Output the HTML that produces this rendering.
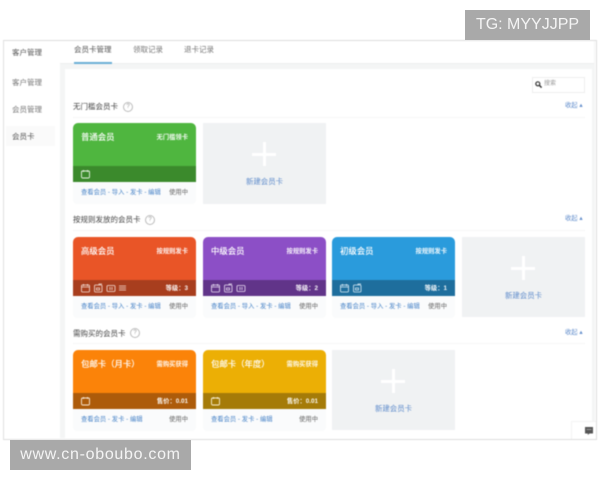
<!DOCTYPE html>
<html lang="zh">
<head>
<meta charset="utf-8">
<style>
html,body{margin:0;padding:0;width:600px;height:480px;overflow:hidden;background:#fff}
body{position:relative;font-family:"Liberation Sans","Noto Sans CJK SC",sans-serif;color:#555}
.a{position:absolute;white-space:nowrap}
#wrap{position:absolute;left:0;top:0;width:600px;height:480px;filter:blur(.4px)}
.card{position:absolute;width:123px;height:81px}
.top{position:absolute;left:0;top:0;width:123px;height:59px;border-radius:5px 5px 0 0;overflow:hidden}
.bar{position:absolute;left:0;right:0;bottom:0;height:16px}
.nm{position:absolute;left:8px;top:8px;font-size:8.4px;line-height:12px;color:#fff;white-space:nowrap;text-shadow:0 0 .4px #fff}
.ty{position:absolute;right:8px;top:9.5px;font-size:6.3px;line-height:10px;color:#fff;font-weight:bold;white-space:nowrap;opacity:.92}
.pr{position:absolute;right:8px;top:3.5px;font-size:6.3px;line-height:10px;color:#fff;font-weight:bold;white-space:nowrap;opacity:.95}
.ic{position:absolute;left:8px;top:3px;height:10px}
.ft{position:absolute;left:0;top:59px;width:123px;height:22px;background:#fafbfc;border-radius:0 0 4px 4px}
.ln{position:absolute;left:8px;top:6px;font-size:6.3px;line-height:10px;color:#4a85c8;white-space:nowrap}
.st{position:absolute;right:8px;top:6px;font-size:6.3px;line-height:10px;color:#666;white-space:nowrap}
.new{position:absolute;width:123px;background:#f0f2f3}
.new i{position:absolute;left:49px;width:24px;height:2.5px;background:#fff}
.new b{position:absolute;left:60px;width:2.5px;height:24px;background:#fff}
.new span{position:absolute;left:0;width:123px;text-align:center;font-size:7.4px;line-height:10px;color:#5f8ccb;font-weight:normal}
.h{position:absolute;left:73px;font-size:7.5px;line-height:12px;color:#444;white-space:nowrap}
.q{position:absolute;width:8px;height:8px;border:1px solid #bbb;border-radius:50%;font-size:6px;line-height:8px;text-align:center;color:#999}
.m{position:absolute;left:565px;font-size:6.3px;line-height:10px;color:#5f8ccb;white-space:nowrap}
.hr{position:absolute;left:73px;width:512px;height:1px;background:#f6f6f6}
.s{position:absolute;left:12px;font-size:7.5px;line-height:10px;color:#777;white-space:nowrap}
.t{position:absolute;top:44.5px;font-size:7.5px;line-height:10px;color:#777;white-space:nowrap}
</style>
</head>
<body>
<div id="wrap">
<div class="a" style="left:3px;top:40px;width:592px;height:398px;border:1px solid #ddd;border-left-color:#e0e0e0;background:#fff;box-sizing:content-box"></div>
<div class="a" style="left:60px;top:41px;width:535px;height:397px;background:#f4f5f5"></div>
<div class="a" style="left:60px;top:41px;width:534px;height:22px;background:#fff;border-bottom:1px solid #eee"></div>
<div class="a" style="left:65px;top:69px;width:527px;height:369px;background:#fff"></div>

<div class="s" style="top:48px;color:#555">客户管理</div>
<div class="s" style="top:78px">客户管理</div>
<div class="s" style="top:105px">会员管理</div>
<div class="a" style="left:6px;top:126px;width:49px;height:20px;background:#fafafa"></div>
<div class="s" style="top:132px;color:#555">会员卡</div>

<div class="t" style="left:74px;color:#555">会员卡管理</div>
<div class="t" style="left:133px">领取记录</div>
<div class="t" style="left:184px">退卡记录</div>
<div class="a" style="left:74px;top:62px;width:38px;height:2px;background:#6aaed6"></div>

<div class="a" style="left:532px;top:77px;width:51px;height:14px;border:1px solid #eee;background:#fff"></div>
<svg class="a" style="left:535px;top:81px" width="7" height="7" viewBox="0 0 7 7"><circle cx="2.8" cy="2.8" r="2" fill="none" stroke="#333" stroke-width="1.2"/><path d="M4.4 4.4L6.6 6.6" stroke="#333" stroke-width="1.5"/></svg>
<div class="a" style="left:544px;top:80px;font-size:6px;line-height:9px;color:#999">搜索</div>

<!-- Section 1 -->
<div class="h" style="top:100.5px">无门槛会员卡</div><div class="q" style="left:123px;top:102px">?</div>
<div class="m" style="top:101px">收起 ▴</div>
<div class="hr" style="top:117px"></div>

<div class="card" style="left:73px;top:123px">
 <div class="top" style="background:#4fb63f"><div class="nm">普通会员</div><div class="ty">无门槛领卡</div>
 <div class="bar" style="background:#3b8a2c"><svg class="ic" width="10" height="10" viewBox="0 0 10 10"><rect x="0.5" y="2" width="8" height="7" rx="1.2" fill="none" stroke="#e8f3e4" stroke-width=".9"/><path d="M2.5 1v2M6.5 1v2" stroke="#e8f3e4" stroke-width=".8"/></svg></div></div>
 <div class="ft"><div class="ln">查看会员 - 导入 - 发卡 - 编辑</div><div class="st">使用中</div></div>
</div>
<div class="new" style="left:203px;top:123px;height:81px"><i style="top:30px"></i><b style="top:19px"></b><span style="top:54px">新建会员卡</span></div>

<!-- Section 2 -->
<div class="h" style="top:214px">按规则发放的会员卡</div><div class="q" style="left:145px;top:215px">?</div>
<div class="m" style="top:214px">收起 ▴</div>
<div class="hr" style="top:230px"></div>

<div class="card" style="left:73px;top:237px">
 <div class="top" style="background:#e95527"><div class="nm">高级会员</div><div class="ty">按规则发卡</div>
 <div class="bar" style="background:#a83e1e"><svg class="ic" width="48" height="10" viewBox="0 0 48 10" fill="none" stroke="#f6e2da" stroke-width=".8"><rect x="0.5" y="2" width="8" height="7" rx="1"/><path d="M.5 4h8M2.5 1v2M6.5 1v2"/><rect x="13.5" y="2" width="7.5" height="7" rx="1"/><path d="M15.5 5h3v2h-3zM18 2V1h3"/><rect x="26" y="2.5" width="8" height="6" rx="1"/><path d="M29 4v3M31 4v3"/><path d="M38 3h7M38 5h7M38 7h7"/></svg><div class="pr">等级：3</div></div></div>
 <div class="ft"><div class="ln">查看会员 - 导入 - 发卡 - 编辑</div><div class="st">使用中</div></div>
</div>
<div class="card" style="left:203px;top:237px">
 <div class="top" style="background:#8c4fc6"><div class="nm">中级会员</div><div class="ty">按规则发卡</div>
 <div class="bar" style="background:#613489"><svg class="ic" width="48" height="10" viewBox="0 0 48 10" fill="none" stroke="#ebe0f4" stroke-width=".8"><rect x="0.5" y="2" width="8" height="7" rx="1"/><path d="M.5 4h8M2.5 1v2M6.5 1v2"/><rect x="13.5" y="2" width="7.5" height="7" rx="1"/><path d="M15.5 5h3v2h-3zM18 2V1h3"/><rect x="26" y="2.5" width="8" height="6" rx="1"/><path d="M29 4v3M31 4v3"/></svg><div class="pr">等级：2</div></div></div>
 <div class="ft"><div class="ln">查看会员 - 导入 - 发卡 - 编辑</div><div class="st">使用中</div></div>
</div>
<div class="card" style="left:332px;top:237px">
 <div class="top" style="background:#2a9bdc"><div class="nm">初级会员</div><div class="ty">按规则发卡</div>
 <div class="bar" style="background:#1e6e9d"><svg class="ic" width="48" height="10" viewBox="0 0 48 10" fill="none" stroke="#dcedf7" stroke-width=".8"><rect x="0.5" y="2" width="8" height="7" rx="1"/><path d="M.5 4h8M2.5 1v2M6.5 1v2"/><rect x="13.5" y="2" width="7.5" height="7" rx="1"/><path d="M15.5 5h3v2h-3zM18 2V1h3"/></svg><div class="pr">等级：1</div></div></div>
 <div class="ft"><div class="ln">查看会员 - 导入 - 发卡 - 编辑</div><div class="st">使用中</div></div>
</div>
<div class="new" style="left:462px;top:237px;height:80px"><i style="top:30px"></i><b style="top:19px"></b><span style="top:54px">新建会员卡</span></div>

<!-- Section 3 -->
<div class="h" style="top:327.5px">需购买的会员卡</div><div class="q" style="left:130px;top:328px">?</div>
<div class="m" style="top:328px">收起 ▴</div>
<div class="hr" style="top:343px"></div>

<div class="card" style="left:73px;top:350px">
 <div class="top" style="background:#fb8309"><div class="nm">包邮卡（月卡）</div><div class="ty">需购买获得</div>
 <div class="bar" style="background:#ad5b0a"><svg class="ic" width="10" height="10" viewBox="0 0 10 10"><rect x="0.5" y="2" width="8" height="7" rx="1.2" fill="none" stroke="#f9e9d6" stroke-width=".9"/><path d="M2.5 1v2M6.5 1v2" stroke="#f9e9d6" stroke-width=".8"/></svg><div class="pr">售价：0.01</div></div></div>
 <div class="ft"><div class="ln">查看会员 - 发卡 - 编辑</div><div class="st">使用中</div></div>
</div>
<div class="card" style="left:203px;top:350px">
 <div class="top" style="background:#ecaf05"><div class="nm">包邮卡（年度）</div><div class="ty">需购买获得</div>
 <div class="bar" style="background:#a57b08"><svg class="ic" width="10" height="10" viewBox="0 0 10 10"><rect x="0.5" y="2" width="8" height="7" rx="1.2" fill="none" stroke="#f9f0d2" stroke-width=".9"/><path d="M2.5 1v2M6.5 1v2" stroke="#f9f0d2" stroke-width=".8"/></svg><div class="pr">售价：0.01</div></div></div>
 <div class="ft"><div class="ln">查看会员 - 发卡 - 编辑</div><div class="st">使用中</div></div>
</div>
<div class="new" style="left:332px;top:350px;height:80px"><i style="top:30px"></i><b style="top:19px"></b><span style="top:54px">新建会员卡</span></div>

<!-- chat -->
<div class="a" style="left:571px;top:421px;width:24px;height:17px;background:#fff;border-left:1px solid #f3f3f3;border-top:1px solid #f3f3f3"></div>
<svg class="a" style="left:584px;top:426px" width="10" height="10" viewBox="0 0 10 10"><path d="M1 1h8v6.5H5.5L3.8 9V7.5H1z" fill="#555"/><path d="M2.5 3.5h5" stroke="#ccc" stroke-width=".6"/></svg>
</div>

<!-- Watermarks -->
<div class="a" style="left:465px;top:10px;width:125px;height:30px;background:#a9a9a9;color:#f4f4f4;font-size:16px;line-height:30px;text-align:center">TG: MYYJJPP</div>
<div class="a" style="left:10px;top:440px;width:181px;height:30px;background:#a9a9a9;color:#f4f4f4;font-size:16px;line-height:30px;text-align:center;letter-spacing:.7px">www.cn-oboubo.com</div>
</body>
</html>
